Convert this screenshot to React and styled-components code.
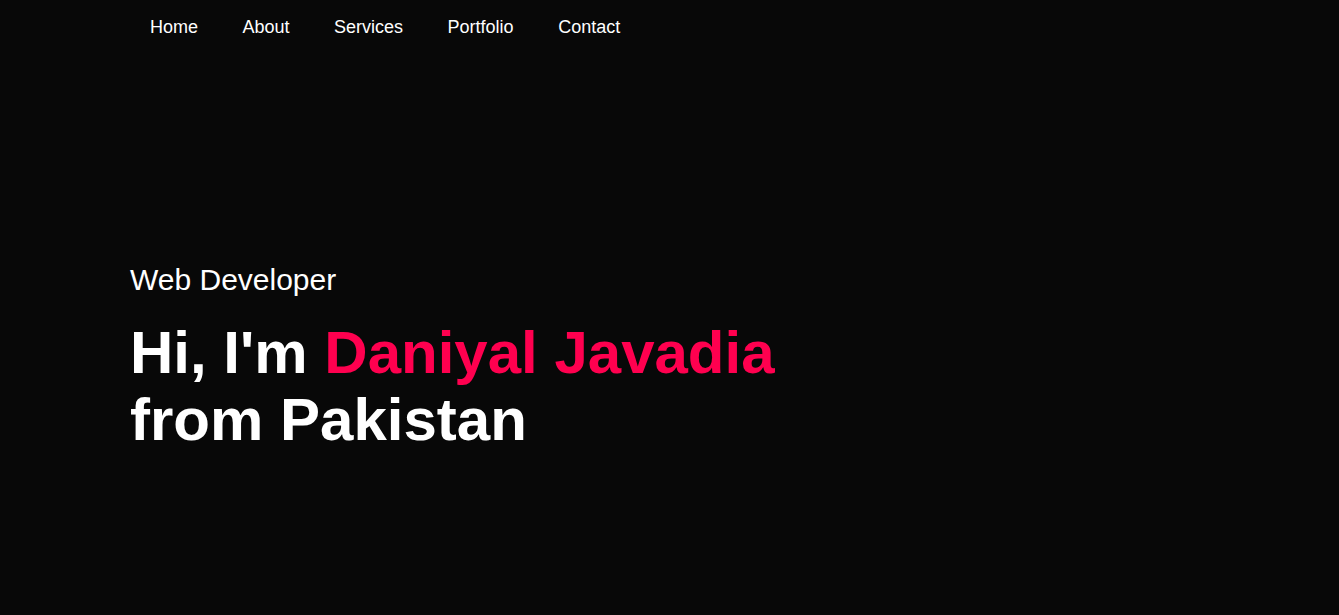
import React from "react";
import styled, { createGlobalStyle } from "styled-components";

const Global = createGlobalStyle`
  html, body { margin: 0; padding: 0; background: #080808; }
  body { font-family: "Liberation Sans", Arial, sans-serif; color: #fff; }
  * { box-sizing: border-box; }
`;

const Header = styled.header`
  min-height: 615px;
  width: 100%;
  background: #080808;
`;

const Container = styled.div`
  padding: 0 130px;
`;

const Nav = styled.nav`
  display: flex;
  padding-top: 17px;
`;

const Menu = styled.ul`
  display: flex;
  list-style: none;
  margin: 0;
  padding: 0 0 0 20px;
  gap: 44.5px;
`;

const MenuItem = styled.li`
  font-size: 18px;
  line-height: normal;
`;

const MenuLink = styled.a`
  color: #fff;
  text-decoration: none;
`;

const HeaderText = styled.div`
  margin-top: 225px;
`;

const Role = styled.p`
  margin: 0;
  font-size: 30px;
  line-height: 34.5px;
`;

const Title = styled.h1`
  margin: 21px 0 0 0;
  font-size: 60px;
  font-weight: 700;
  line-height: 67px;
`;

const Accent = styled.span`
  color: #ff004f;
`;

const links = ["Home", "About", "Services", "Portfolio", "Contact"];

export default function App() {
  return (
    <>
      <Global />
      <Header>
        <Container>
          <Nav>
            <Menu>
              {links.map((l) => (
                <MenuItem key={l}>
                  <MenuLink href="#">{l}</MenuLink>
                </MenuItem>
              ))}
            </Menu>
          </Nav>
          <HeaderText>
            <Role>Web Developer</Role>
            <Title>
              Hi, I'm <Accent>Daniyal Javadia</Accent>
              <br />
              from Pakistan
            </Title>
          </HeaderText>
        </Container>
      </Header>
    </>
  );
}
